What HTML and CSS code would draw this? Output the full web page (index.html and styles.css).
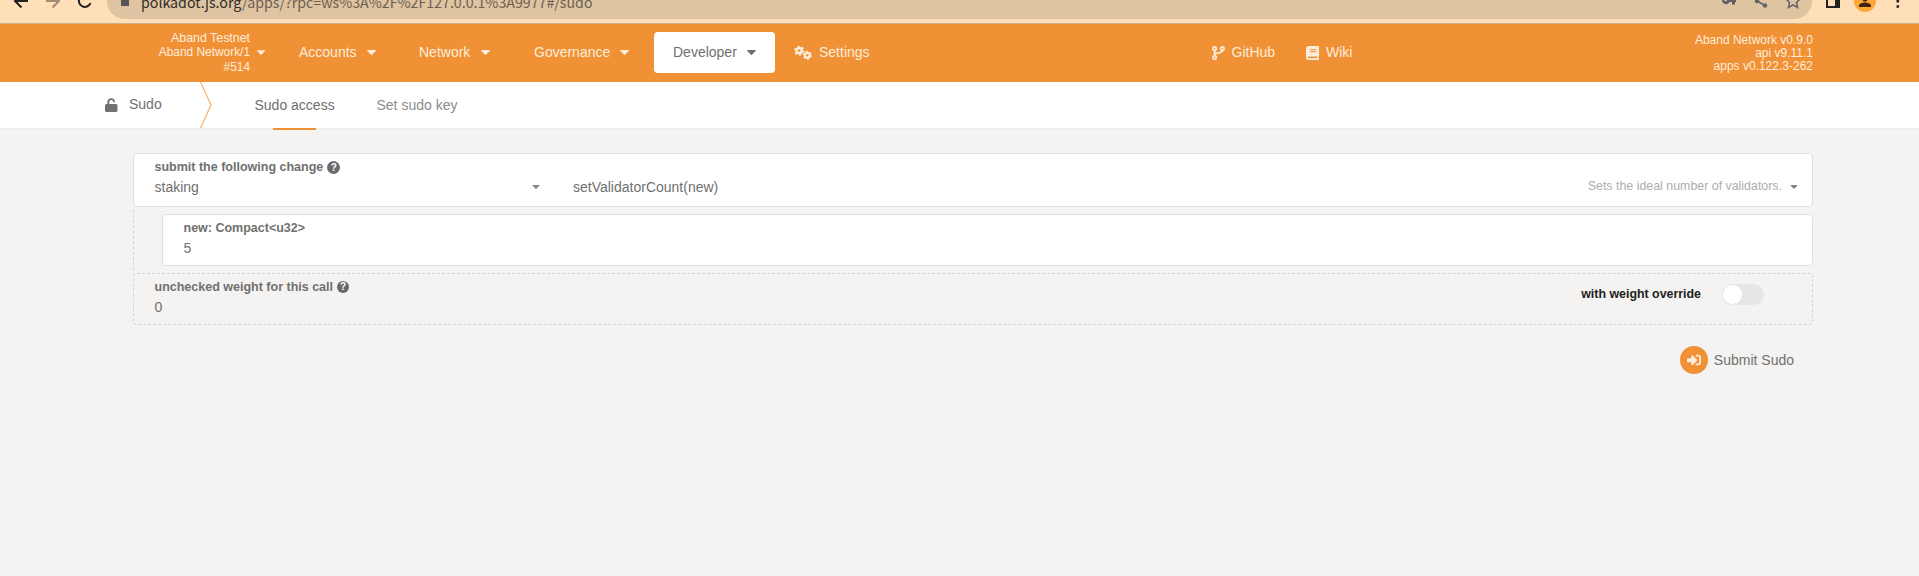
FILE: index.html
```html
<!DOCTYPE html>
<html lang="en">
<head>
<meta charset="utf-8">
<title>Sudo</title>
<link rel="stylesheet" href="styles.css">
</head>
<body>
<svg class="defs" width="0" height="0" aria-hidden="true">
  <symbol id="caret" viewBox="16 192 288 169"><path d="M31.3 192h257.3c17.8 0 26.7 21.5 14.1 34.1L174.1 354.8c-7.8 7.8-20.5 7.8-28.3 0L17.2 226.1C4.6 213.5 13.5 192 31.3 192z"/></symbol>
</svg>

<div class="browser">
  <svg class="nav-icons" width="107" height="20" viewBox="0 0 107 20" fill="none" stroke-width="2">
    <path stroke="#202124" d="M28 1H15M21.5 7.500L15 1l6.500-6.500"/>
    <path stroke="#a08c74" d="M46 1h13M52.500 7.500L59 1l-6.500-6.500"/>
    <path stroke="#202124" d="M90.500 3a6 6 0 1 1-1.500-6.500"/>
  </svg>
  <div class="omnibox">
    <span class="site-lock"></span>
    <span class="url"><b>polkadot.js.org</b>/apps/?rpc=ws%3A%2F%2F127.0.0.1%3A9977#/sudo</span>
    <svg class="omni-icons" width="100" height="20" viewBox="1712 0 100 20">
      <path fill="#5f6368" d="M1729 0h7v2h-1v2.500h-3V2h-2.500a4 4 0 0 1-7.500-1v-1z"/>
      <circle cx="1725.500" cy="0" r="1.300" fill="#dec4a1"/>
      <path d="M1757 1l8 4.500" stroke="#5f6368" stroke-width="1.600"/><circle cx="1757" cy="1" r="2.200" fill="#5f6368"/><circle cx="1765" cy="5.500" r="2.200" fill="#5f6368"/>
      <path d="M1793-6l2.200 4.500 4.800.5-3.500 3.500 1 5-4.500-2.600-4.500 2.600 1-5-3.500-3.500 4.800-.5z" fill="none" stroke="#5f6368" stroke-width="1.500"/>
    </svg>
  </div>
  <svg class="browser-end" width="107" height="20" viewBox="1812 0 107 20">
    <path fill="#202124" d="M1826-5h14V8h-14z"/><path fill="#ffdfb8" d="M1828-3h7v9h-7z"/>
    <circle cx="1865" cy="1" r="11" fill="#ffa837"/>
    <path fill="#3f2407" d="M1859 7V5.500c0-2 4-3 6-3s6 1 6 3V7z"/><circle cx="1865" cy="-1" r="2.500" fill="#3f2407"/>
    <path fill="#202124" d="M1896.500 5.200h2.600v2.600h-2.600zM1896.500 0h2.600v2.600h-2.600z"/>
  </svg>
</div>

<header class="menu">
  <div class="chain">
    <div class="chain-text"><div class="chain-name">Aband Testnet</div><div>Aband Network/1</div><div>#514</div></div>
    <svg class="caret caret-sm"><use href="#caret"/></svg>
  </div>
  <nav class="items">
    <a class="item accounts">Accounts<svg class="caret"><use href="#caret"/></svg></a>
    <a class="item network">Network<svg class="caret"><use href="#caret"/></svg></a>
    <a class="item governance">Governance<svg class="caret"><use href="#caret"/></svg></a>
    <a class="item developer">Developer<svg class="caret"><use href="#caret"/></svg></a>
    <a class="item settings">
      <svg width="18" height="14" viewBox="0 0 18 14" fill="none" stroke="currentColor">
        <circle cx="5.200" cy="4.600" r="2.600" stroke-width="2.400"/><circle cx="5.200" cy="4.600" r="4.200" stroke-width="1.800" stroke-dasharray="2.200 2.200"/>
        <circle cx="13.300" cy="9.300" r="2.400" stroke-width="2.200"/><circle cx="13.300" cy="9.300" r="3.800" stroke-width="1.600" stroke-dasharray="2 1.980"/>
      </svg>Settings</a>
  </nav>
  <a class="item github">
    <svg width="13" height="14" viewBox="0 0 13 14" fill="none" stroke="currentColor" stroke-width="1.700">
      <circle cx="2.600" cy="2.500" r="1.700"/><circle cx="2.600" cy="11.500" r="1.700"/><circle cx="10.400" cy="2.500" r="1.700"/><path d="M2.600 4.200v5.600M10.400 4.200v.6c0 3-7.800 1-7.800 4.300"/>
    </svg>GitHub</a>
  <a class="item wiki">
    <svg width="13" height="14" viewBox="0 0 448 512" preserveAspectRatio="none"><path fill="currentColor" fill-rule="evenodd" d="M448 360V24c0-13.300-10.700-24-24-24H96C43 0 0 43 0 96v320c0 53 43 96 96 96h328c13.300 0 24-10.700 24-24v-16c0-7.500-3.500-14.300-8.900-18.700-4.200-15.400-4.200-59.300 0-74.700 5.400-4.300 8.900-11.100 8.900-18.600zM128 118h230v40H128zM128 190h230v40H128zM381.400 448H96c-17.700 0-32-14.300-32-32s14.400-32 32-32h285.400c-1.900 17.100-1.900 46.900 0 64z"/></svg>Wiki</a>
  <div class="versions"><div>Aband Network v0.9.0</div><div>api v9.11.1</div><div>apps v0.122.3-262</div></div>
</header>

<div class="tabs">
  <div class="section">
    <svg width="13" height="14" viewBox="0 0 13 14"><rect y="6" width="12.500" height="8" rx="1.500" fill="#707070"/><path d="M3.300 7V4a2.900 2.900 0 0 1 5.700-.7v.9" fill="none" stroke="#707070" stroke-width="1.900"/></svg>
    <span>Sudo</span>
  </div>
  <svg class="divider" width="12" height="46" viewBox="0 0 12 46"><path d="M.5 0l10.500 23L.5 46" fill="none" stroke="#f19135" stroke-opacity=".75" stroke-width="1.200"/></svg>
  <a class="tab active">Sudo access</a>
  <a class="tab">Set sudo key</a>
</div>

<main class="form">
  <section class="box call">
    <div class="label">submit the following change<span class="help">?</span></div>
    <div class="call-row">
      <div class="module"><span>staking</span><svg class="caret arrow"><use href="#caret"/></svg></div>
      <span class="method">setValidatorCount(new)</span>
      <span class="hint">Sets the ideal number of validators.</span>
      <svg class="caret arrow"><use href="#caret"/></svg>
    </div>
  </section>
  <div class="params">
    <section class="box param"><div class="label">new: Compact&lt;u32&gt;</div><div class="value">5</div></section>
  </div>
  <section class="box weight">
    <div><div class="label">unchecked weight for this call<span class="help small">?</span></div><div class="value">0</div></div>
    <div class="override"><span>with weight override</span><span class="toggle"><i></i></span></div>
  </section>
  <div class="actions">
    <span class="circle"><svg width="14" height="14" viewBox="0 0 512 512"><path fill="currentColor" d="M416 448h-84c-6.600 0-12-5.400-12-12v-40c0-6.600 5.400-12 12-12h84c17.700 0 32-14.300 32-32V160c0-17.700-14.300-32-32-32h-84c-6.600 0-12-5.400-12-12V76c0-6.600 5.400-12 12-12h84c53 0 96 43 96 96v192c0 53-43 96-96 96zm-47-201L201 79c-15-15-41-4.500-41 17v96H24c-13.300 0-24 10.700-24 24v96c0 13.300 10.700 24 24 24h136v96c0 21.500 26 32 41 17l168-168c9.300-9.400 9.300-24.600 0-34z"/></svg></span>
    <span>Submit Sudo</span>
  </div>
</main>
</body>
</html>
```
FILE: styles.css
```css
* { box-sizing: border-box; }
body {
  margin: 0;
  height: 576px;
  overflow: hidden;
  background: #f4f3f1;
  color: #707070;
  font: 14px/16px "Liberation Sans", Arial, sans-serif;
}
svg { display: block; flex: none; }
.defs { position: absolute; }

.browser {
  display: flex;
  height: 24px;
  background: #ffdfb8;
  border-bottom: 1px solid #cbb38f;
}
.omnibox {
  display: flex;
  width: 1705px;
  height: 19px;
  background: #dec4a1;
  border-radius: 0 0 18px 18px;
}
.site-lock { width: 8px; height: 6px; margin: 0 12px 0 14px; background: #54555a; }
.url {
  height: 22px;
  margin-top: -9px;
  color: #6b6052;
  font: 14.200px/22px "Noto Sans CJK SC", "Noto Sans", sans-serif;
  white-space: nowrap;
}
.url b { font-weight: 400; color: #2f2c29; }
.omni-icons { margin-left: auto; }

.menu {
  display: flex;
  align-items: center;
  height: 58px;
  padding-bottom: 1px;
  background: #f19135;
  color: #fdeddc;
}
.chain { display: flex; align-items: center; width: 299px; }
.chain-text { width: 250px; text-align: right; font-size: 11.900px; line-height: 14.500px; }
.chain-name { font-size: 12.400px; }
.caret { width: 9px; height: 5px; fill: currentColor; }
.caret-sm { width: 8px; margin-left: 7px; }
.items { display: flex; align-items: center; width: 913px; }
.item { display: flex; align-items: center; padding-bottom: 1px; white-space: nowrap; }
.item svg { margin-top: 1px; }
.item .caret { margin-left: 11px; }
.accounts { width: 120px; }
.accounts .caret { margin-left: 10px; }
.network { width: 115px; }
.governance { width: 120px; }
.governance .caret { margin-left: 10px; }
.developer {
  width: 121px;
  height: 41px;
  padding-left: 19px;
  border-radius: 4px;
  background: #fff;
  color: #707070;
}
.developer .caret { margin-left: 10px; }
.settings { margin-left: 19px; gap: 7px; }
.github { width: 94px; gap: 6.500px; }
.wiki { gap: 7px; }
.versions { margin: 1px 106px 0 auto; text-align: right; font-size: 12px; line-height: 13px; }

.tabs {
  display: flex;
  height: 47px;
  background: #fff;
  border-bottom: 1px solid #ededec;
}
.section { display: flex; gap: 11px; width: 200px; height: 46px; padding: 15px 0 0 105px; }
.section span { line-height: 16px; margin-top: -1px; }
.section svg { margin-top: 1px; }
.tab { width: 122px; height: 48px; padding-top: 15px; color: #8b8b8b; line-height: 17px; }
.divider + .tab { margin-left: 42.500px; }
.tab.active {
  color: #707070;
  background: linear-gradient(#f19135, #f19135) 18px 46px / 43px 2px no-repeat;
}

.form { margin: 24px 106px 0 133px; }
.box { border: 1px solid #dedfdf; border-radius: 4px; background: #fff; padding-left: 20.500px; }
.call { height: 54px; padding-top: 5px; }
.label { display: flex; align-items: center; height: 16px; font-size: 12.500px; font-weight: 700; }
.help {
  width: 13px;
  height: 13px;
  margin-left: 4px;
  border-radius: 50%;
  background: #6a6a6a;
  color: #fff;
  font-size: 10px;
  line-height: 13px;
  text-align: center;
}
.help.small { width: 12px; height: 12px; line-height: 12px; }
.call-row { display: flex; align-items: center; height: 24px; margin-right: 14px; }
.arrow { width: 8px; height: 4px; color: #858585; }
.module { display: flex; align-items: center; justify-content: space-between; width: 385px; margin-right: 33.500px; }
.hint { margin: -2px 8px 0 auto; color: #adadad; font-size: 12.400px; }
.params { height: 60px; margin: 3px 0; padding: 4px 0 4px 28px; border-left: 1px dashed #d3d3d3; }
.param { height: 52px; padding-top: 5px; }
.value { margin-top: 4px; }
.weight {
  display: flex;
  justify-content: space-between;
  height: 52px;
  padding-top: 5px;
  border: 1px dashed #d3d3d3;
  background: transparent;
}
.override {
  display: flex;
  gap: 21px;
  margin: 5px 48px 0 0;
  color: #222;
  font-size: 12.400px;
  font-weight: 700;
}
.override > span:first-child { margin-top: 2px; }
.toggle { width: 42px; height: 21px; padding: 1px; border-radius: 11px; background: #e4e6e8; }
.toggle i { display: block; width: 19px; height: 19px; border-radius: 50%; background: #fff; }
.actions { display: flex; align-items: center; justify-content: flex-end; gap: 6px; margin: 21px 19px 0 0; }
.circle { display: grid; place-items: center; width: 28px; height: 28px; border-radius: 50%; background: #f19135; color: #fdeddc; }
```
